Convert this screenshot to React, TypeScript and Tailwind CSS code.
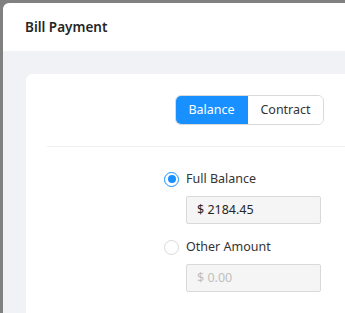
const font = { fontFamily: '"Noto Sans", "Open Sans", sans-serif' };

function Radio({ checked, label }: { checked: boolean; label: string }) {
  return (
    <label className="flex h-[18px] items-center gap-[7px] text-[12.5px] text-[#333]">
      <span
        className={
          checked
            ? 'flex h-[15px] w-[15px] items-center justify-center rounded-full border border-[#1890ff] bg-white'
            : 'flex h-[15px] w-[15px] items-center justify-center rounded-full border border-[#d9d9d9] bg-white'
        }
      >
        {checked && <span className="h-[8px] w-[8px] rounded-full bg-[#1890ff]" />}
      </span>
      {label}
    </label>
  );
}

export default function App() {
  return (
    <div className="h-[313px] overflow-hidden bg-[#808080] pl-[3px] pt-[3px]" style={font}>
      <div className="flex h-full flex-col overflow-hidden rounded-tl-[6px] bg-white">
        <div className="flex h-[48px] shrink-0 items-center px-[22px]">
          <h1 className="text-[13.5px] font-semibold text-[#262626]">Bill Payment</h1>
        </div>

        <div className="flex-1 bg-[#f0f2f5] pl-[23px] pt-[23px]">
          <div className="h-full rounded-tl-[6px] bg-white pl-[21px] pt-[21px]">
            <div className="flex justify-end pr-[21px]">
              <div className="flex h-[30px] overflow-hidden rounded-[6px] border border-[#d9d9d9] text-[12.5px]">
                <button className="-my-px -ml-px w-[73px] bg-[#1890ff] text-white">Balance</button>
                <button className="w-[75px] bg-white text-[#333]">Contract</button>
              </div>
            </div>

            <div className="mt-[21px] h-px bg-[#f0f0f0]" />

            <div className="pl-[117px] pt-[23px]">
              <Radio checked label="Full Balance" />
              <div className="ml-[22px] mt-[8px] flex h-[28px] w-[135px] items-center rounded-[2px] border border-[#d9d9d9] bg-[#f5f5f5] px-[10px] text-[12.5px] text-[#262626]">
                $ 2184.45
              </div>

              <div className="mt-[14px]">
                <Radio checked={false} label="Other Amount" />
              </div>
              <div className="ml-[22px] mt-[8px] flex h-[28px] w-[135px] items-center rounded-[2px] border border-[#d9d9d9] bg-[#f5f5f5] px-[10px] text-[12.5px] text-[#bfbfbf]">
                $ 0.00
              </div>
            </div>
          </div>
        </div>
      </div>
    </div>
  );
}
